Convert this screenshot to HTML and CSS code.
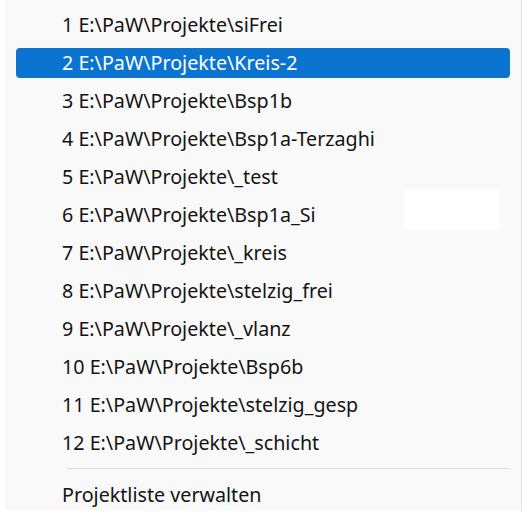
FILE: index.html
```html
<!DOCTYPE html>
<html>
<head>
<meta charset="utf-8">
<link rel="stylesheet" href="styles.css">
</head>
<body>
<div class="menu">
  <ul class="list">
    <li class="item">1 E:\PaW\Projekte\siFrei</li>
    <li class="item active">2 E:\PaW\Projekte\Kreis-2</li>
    <li class="item">3 E:\PaW\Projekte\Bsp1b</li>
    <li class="item">4 E:\PaW\Projekte\Bsp1a-Terzaghi</li>
    <li class="item">5 E:\PaW\Projekte\_test</li>
    <li class="item">6 E:\PaW\Projekte\Bsp1a_Si</li>
    <li class="item">7 E:\PaW\Projekte\_kreis</li>
    <li class="item">8 E:\PaW\Projekte\stelzig_frei</li>
    <li class="item">9 E:\PaW\Projekte\_vlanz</li>
    <li class="item">10 E:\PaW\Projekte\Bsp6b</li>
    <li class="item">11 E:\PaW\Projekte\stelzig_gesp</li>
    <li class="item">12 E:\PaW\Projekte\_schicht</li>
  </ul>
  <div class="sep"></div>
  <div class="list">
    <div class="item">Projektliste verwalten</div>
  </div>
  <div class="ghost"></div>
</div>
</body>
</html>
```
FILE: styles.css
```css
html, body {
  margin: 0;
  padding: 0;
  background: #ffffff;
}
.menu {
  position: relative;
  width: 517px;
  height: 511px;
  margin-left: 5px;
  background: #f9f9f9;
  border-right: 1px solid #e2e2e2;
  padding-top: 6px;
  box-sizing: border-box;
  font-family: "Noto Sans", "Open Sans", sans-serif;
  font-size: 19.7px;
  color: #141414;
}
.list {
  list-style: none;
  margin: 0;
  padding: 4px 11px 4px 11px;
  display: flex;
  flex-direction: column;
  gap: 8px;
}
.item {
  height: 30px;
  line-height: 30px;
  padding-left: 46px;
  border-radius: 4px;
  white-space: nowrap;
}
.active {
  background: #0a74d0;
  color: #ffffff;
}
.sep {
  height: 1px;
  background: #d9d9d9;
  margin: 6px 11px 7px 62px;
}
.ghost {
  position: absolute;
  left: 399px;
  top: 190px;
  width: 95px;
  height: 40px;
  background: #ffffff;
  box-shadow: 0 0 3px rgba(255,255,255,0.9);
}
```
